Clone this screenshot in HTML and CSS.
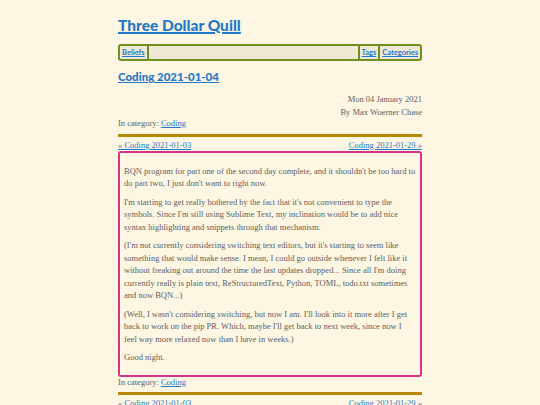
FILE: index.html
```html
<!DOCTYPE html>
<html>
<head>
<meta charset="utf-8">
<link rel="stylesheet" href="styles.css">
</head>
<body>
<div class="page">
  <h1 class="site-title"><a href="#">Three Dollar Quill</a></h1>
  <nav class="nav">
    <a class="nav-item first" href="#">Beliefs</a>
    <span class="nav-fill"></span>
    <a class="nav-item" href="#">Tags</a>
    <a class="nav-item" href="#">Categories</a>
  </nav>
  <h2 class="post-title"><a href="#">Coding 2021-01-04</a></h2>
  <div class="meta">
    <div>Mon 04 January 2021</div>
    <div>By Max Woerner Chase</div>
  </div>
  <div class="category">In category: <a href="#">Coding</a></div>
  <div class="rule"></div>
  <div class="pager"><a href="#">« Coding 2021-01-03</a><a href="#">Coding 2021-01-29 »</a></div>
  <article class="entry">
    <p>BQN program for part one of the second day complete, and it shouldn't be too hard to do part two, I just don't want to right now.</p>
    <p>I'm starting to get really bothered by the fact that it's not convenient to type the symbols. Since I'm still using Sublime Text, my inclination would be to add nice syntax highlighting and snippets through that mechanism.</p>
    <p>(I'm not currently considering switching text editors, but it's starting to seem like something that would make sense. I mean, I could go outside whenever I felt like it without freaking out around the time the last updates dropped... Since all I'm doing currently really is plain text, ReStructuredText, Python, TOML, todo.txt sometimes and now BQN...)</p>
    <p>(Well, I wasn't considering switching, but now I am. I'll look into it more after I get back to work on the pip PR. Which, maybe I'll get back to next week, since now I feel way more relaxed now than I have in weeks.)</p>
    <p>Good night.</p>
  </article>
  <div class="category">In category: <a href="#">Coding</a></div>
  <div class="rule"></div>
  <div class="pager"><a href="#">« Coding 2021-01-03</a><a href="#">Coding 2021-01-29 »</a></div>
</div>
</body>
</html>
```
FILE: styles.css
```css
html, body {
  margin: 0;
  padding: 0;
  background: #fdf6e3;
}
body {
  font-family: "Liberation Serif", serif;
  font-size: 8.5px;
  line-height: 12.5px;
  color: #5e5e5e;
  overflow: hidden;
  height: 405px;
}
a {
  color: #1f78c8;
}
.page {
  width: 304px;
  margin: 0 auto;
  padding-top: 15px;
}
.site-title {
  margin: 0;
  font-family: "Lato", "Noto Sans", sans-serif;
  font-weight: 900;
  font-size: 15.5px;
  line-height: 20px;
}
.site-title a {
  text-decoration-thickness: 2px;
}
.nav {
  margin-top: 9px;
  display: flex;
  align-items: stretch;
  height: 13px;
  border: 2px solid #6f8f1f;
  border-radius: 3px;
  background: #eee8d5;
  font-family: "Lato", "Noto Sans", sans-serif;
  font-weight: 700;
  font-size: 7.5px;
  line-height: 13px;
}
.nav-item {
  padding: 0 2px;
  border-left: 2px solid #6f8f1f;
}
.nav-item.first {
  border-left: none;
  border-right: 2px solid #6f8f1f;
}
.nav-fill {
  flex: 1;
}
.post-title {
  margin: 9px 0 0;
  font-family: "Lato", "Noto Sans", sans-serif;
  font-weight: 900;
  font-size: 11.5px;
  line-height: 14px;
}
.meta {
  margin-top: 9px;
  text-align: right;
}
.category {
  line-height: 11.5px;
}
.rule {
  height: 3px;
  background: #b58900;
  margin: 4px 0 3px;
}
.pager {
  display: flex;
  justify-content: space-between;
  line-height: 11px;
}
.entry {
  border: 2px solid #d33682;
  border-radius: 3px;
  padding: 6px 4px 5px;
}
.entry p {
  margin: 6px 0;
}
```
